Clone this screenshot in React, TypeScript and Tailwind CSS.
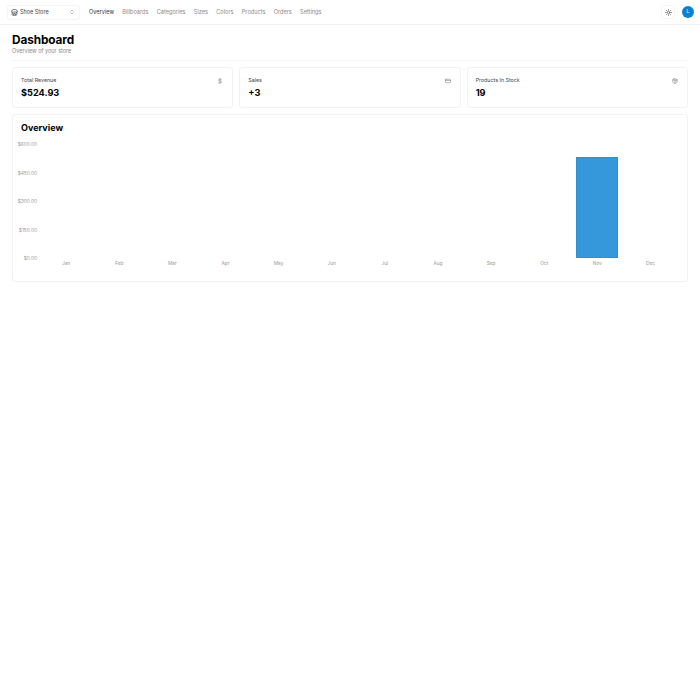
import { ChevronsUpDown, CreditCard, DollarSign, Package, Store, Sun } from 'lucide-react'

const links = ['Overview', 'Billboards', 'Categories', 'Sizes', 'Colors', 'Products', 'Orders', 'Settings']
const months = ['Jan', 'Feb', 'Mar', 'Apr', 'May', 'Jun', 'Jul', 'Aug', 'Sep', 'Oct', 'Nov', 'Dec']
const ticks = ['$600.00', '$450.00', '$300.00', '$150.00', '$0.00']
const stats = [
  { title: 'Total Revenue', value: '$524.93', Icon: DollarSign },
  { title: 'Sales', value: '+3', Icon: CreditCard },
  { title: 'Products In Stock', value: '19', Icon: Package },
]

const App = (): JSX.Element => {
  return (
    <div className="min-h-[700px] bg-white font-['Inter',sans-serif] text-[#0a0a0a]">
      <header className="flex h-[25px] items-center border-b border-[#f2f2f2] pl-[7px] pr-[6px]">
        <button className="flex h-[15px] w-[73px] items-center justify-between rounded-[3px] border border-[#f4f4f4] pl-[3px] pr-[4px] text-[5.5px] text-[#444444]">
          <span className="flex items-center gap-[2px]">
            <Store className="h-[7px] w-[7px]" strokeWidth={2.5} />
            Shoe Store
          </span>
          <ChevronsUpDown className="h-[6px] w-[6px] text-[#777777]" />
        </button>
        <nav className="ml-[9px] flex items-center gap-[8.3px] text-[5.6px]">
          {links.map((link, i) => (
            <span key={link} className={i === 0 ? 'text-[#333333]' : 'text-[#8a8a8a]'}>
              {link}
            </span>
          ))}
        </nav>
        <div className="ml-auto flex items-center gap-[7px]">
          <div className="flex h-[14px] w-[14px] items-center justify-center rounded-[3px] border border-[#f6f6f6]">
            <Sun className="h-[7px] w-[7px] text-[#555555]" strokeWidth={2.5} />
          </div>
          <div className="flex h-[12px] w-[12px] items-center justify-center rounded-full bg-[#0b82d0] text-[5px] text-white">
            L
          </div>
        </div>
      </header>

      <main className="px-[12px] pt-[9px]">
        <div className="border-b border-[#f4f4f4] pb-[5px]">
          <h1 className="text-[11.8px] font-bold leading-[13px] tracking-[-0.1px] text-black">Dashboard</h1>
          <p className="mt-[1px] text-[5.5px] leading-[7px] text-[#888888]">Overview of your store</p>
        </div>

        <div className="mt-[6px] grid grid-cols-3 gap-[6px]">
          {stats.map(({ title, value, Icon }) => (
            <div key={title} className="h-[41px] rounded-[3px] border border-[#f2f2f2] pl-[8px] pr-[9px] pt-[9px]">
              <div className="flex items-center justify-between text-[5.3px] leading-[7px] text-[#444444]">
                {title}
                <Icon className="h-[6px] w-[6px] text-[#777777]" />
              </div>
              <div className="mt-[2px] text-[9.2px] font-bold leading-[13px] text-black">{value}</div>
            </div>
          ))}
        </div>

        <div className="mt-[6px] h-[168px] rounded-[3px] border border-[#f2f2f2] pl-[8px] pr-[10px] pt-[7px]">
          <h2 className="text-[9px] font-bold leading-[12px] text-black">Overview</h2>
          <div className="mt-[5px] flex">
            <div className="flex h-[123px] w-[18.5px] shrink-0 flex-col items-end justify-between whitespace-nowrap pr-[2.5px] pt-[2px] text-[4.8px] leading-[7px] text-[#999999]">
              {ticks.map((tick) => (
                <span key={tick}>{tick}</span>
              ))}
            </div>
            <div className="grid flex-1 grid-cols-12">
              {months.map((month) => (
                <div key={month} className="flex flex-col items-center">
                  <div className="flex h-[119px] w-full items-end justify-center">
                    {month === 'Nov' && <div className="h-[101px] w-[42px] border border-[#3190d3] bg-[#3498db]" />}
                  </div>
                  <span className="mt-[2px] text-[4.8px] leading-[7px] text-[#999999]">{month}</span>
                </div>
              ))}
            </div>
          </div>
        </div>
      </main>
    </div>
  )
}

export default App
